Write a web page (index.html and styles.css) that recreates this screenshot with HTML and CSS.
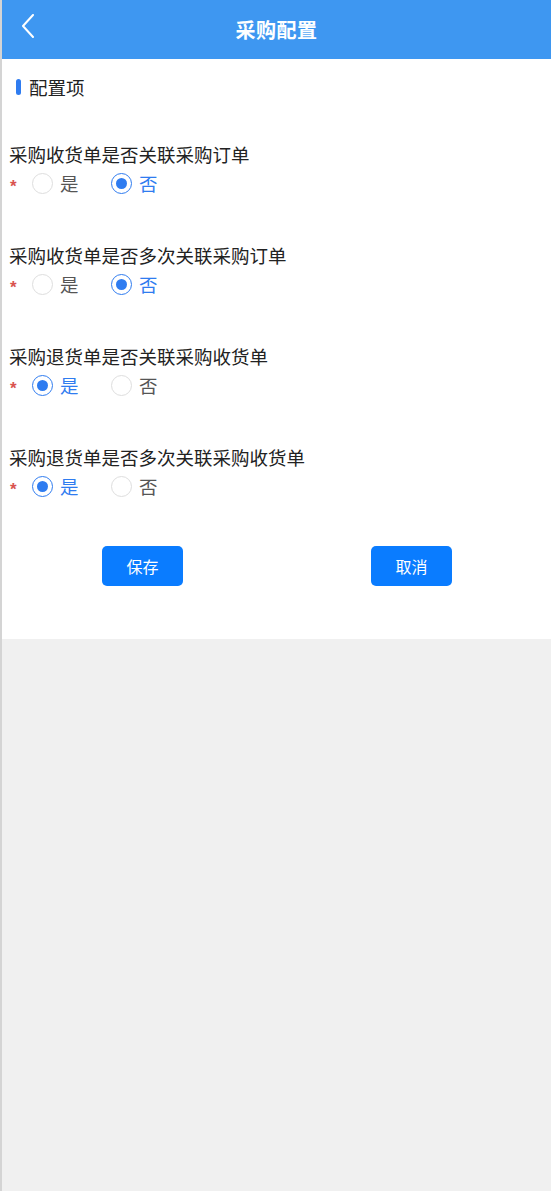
FILE: index.html
```html
<!DOCTYPE html>
<html lang="zh">
<head>
<meta charset="utf-8">
<title>采购配置</title>
<link rel="stylesheet" href="styles.css">
</head>
<body>
<div class="page">
  <header class="topbar">
    <span class="back">
      <svg width="14" height="24" viewBox="0 0 14 24"><polyline points="12,1 2,12 12,23" fill="none" stroke="#fff" stroke-width="2" stroke-linecap="round" stroke-linejoin="round"/></svg>
    </span>
    <h1 class="title">采购配置</h1>
  </header>
  <main class="panel">
    <div class="section-title"><span class="marker"></span>配置项</div>

    <div class="group">
      <div class="q">采购收货单是否关联采购订单</div>
      <div class="opts">
        <span class="star">*</span>
        <span class="opt"><span class="radio"></span><span class="txt">是</span></span>
        <span class="opt on"><span class="radio"></span><span class="txt">否</span></span>
      </div>
    </div>

    <div class="group">
      <div class="q">采购收货单是否多次关联采购订单</div>
      <div class="opts">
        <span class="star">*</span>
        <span class="opt"><span class="radio"></span><span class="txt">是</span></span>
        <span class="opt on"><span class="radio"></span><span class="txt">否</span></span>
      </div>
    </div>

    <div class="group">
      <div class="q">采购退货单是否关联采购收货单</div>
      <div class="opts">
        <span class="star">*</span>
        <span class="opt on"><span class="radio"></span><span class="txt">是</span></span>
        <span class="opt"><span class="radio"></span><span class="txt">否</span></span>
      </div>
    </div>

    <div class="group">
      <div class="q">采购退货单是否多次关联采购收货单</div>
      <div class="opts">
        <span class="star">*</span>
        <span class="opt on"><span class="radio"></span><span class="txt">是</span></span>
        <span class="opt"><span class="radio"></span><span class="txt">否</span></span>
      </div>
    </div>

    <div class="actions">
      <button class="btn">保存</button>
      <button class="btn">取消</button>
    </div>
  </main>
</div>
</body>
</html>
```
FILE: styles.css
```css
* { box-sizing: border-box; }
html, body { margin: 0; padding: 0; }
body {
  font-family: "Microsoft YaHei", "Noto Sans CJK SC", "Noto Sans", sans-serif;
  background: #f0f0f0;
}
.page {
  min-height: 1191px;
  border-left: 2px solid #d4d4d4;
  background: #f0f0f0;
}
.topbar {
  height: 59px;
  background: #3e97f1;
  display: flex;
  align-items: center;
  justify-content: center;
  position: relative;
}
.back {
  position: absolute;
  left: 19px;
  top: 14px;
  display: flex;
}
.title {
  margin: 0;
  color: #fff;
  font-size: 20px;
  font-weight: bold;
  line-height: 24px;
  letter-spacing: 0.5px;
}
.panel {
  background: #fff;
  padding: 16px 0 53px 7px;
}
.section-title {
  display: flex;
  align-items: center;
  font-size: 18.5px;
  line-height: 24px;
  color: #222;
  margin-bottom: 43px;
}
.marker {
  width: 5px;
  height: 16px;
  border-radius: 3px;
  background: #2f7cf0;
  margin-left: 7px;
  margin-right: 8px;
}
.group + .group { margin-top: 48px; }
.q {
  font-size: 18.5px;
  line-height: 24px;
  color: #222;
}
.opts {
  display: flex;
  align-items: center;
  height: 24px;
  margin-top: 5px;
}
.star {
  color: #d9534f;
  font-size: 17px;
  font-weight: bold;
  width: 23px;
  padding-left: 1px;
  padding-top: 8px;
  font-family: "Liberation Sans", sans-serif;
}
.opt {
  display: flex;
  align-items: center;
  width: 79px;
  font-size: 18.5px;
  color: #555;
}
.radio {
  width: 21px;
  height: 21px;
  border-radius: 50%;
  border: 1px solid #dedede;
  margin-right: 7px;
  display: flex;
  align-items: center;
  justify-content: center;
}
.opt.on .radio { border-color: #2f7cf0; }
.opt.on .radio::after {
  content: "";
  width: 11px;
  height: 11px;
  border-radius: 50%;
  background: #2f7cf0;
}
.opt.on { color: #2f7cf0; }
.actions {
  display: flex;
  justify-content: space-between;
  padding: 0 99px 0 93px;
  margin-top: 48px;
}
.btn {
  width: 81px;
  height: 40px;
  border: 0;
  border-radius: 5px;
  background: #0a7cff;
  color: #fff;
  font-family: inherit;
  font-size: 16px;
}
```
